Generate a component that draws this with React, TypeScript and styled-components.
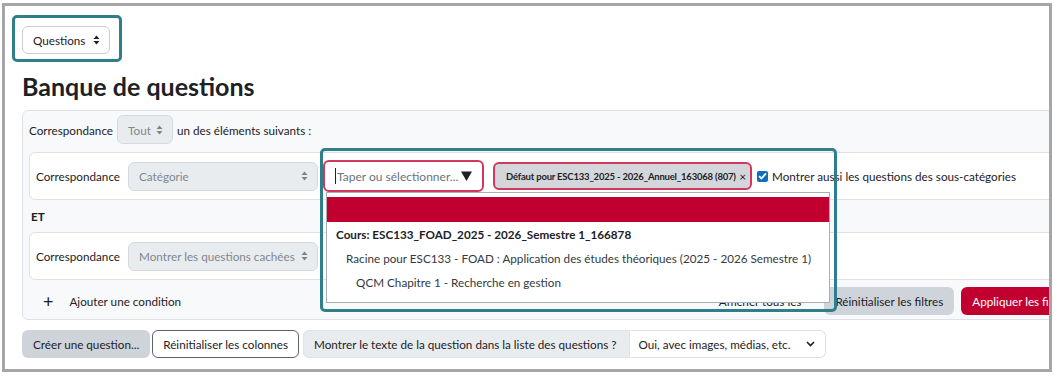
import React from 'react';
import styled, { createGlobalStyle } from 'styled-components';

const teal = '#2f7e8b';
const mark = '#d2385c';
const red = '#c1002f';
const ink = '#1d2125';

const GlobalStyle = createGlobalStyle`
  body {
    margin: 0;
    background: #fff;
    font-family: Lato, 'Noto Sans', sans-serif;
    font-size: 11.7px;
    color: ${ink};
  }
`;

const Frame = styled.div`
  position: relative;
  margin: 3px 0 0 2px;
  width: 1050px;
  height: 369px;
  box-sizing: border-box;
  border: 3px solid #a6a6a6;
  overflow: hidden;
`;

const Page = styled.div`
  width: 1110px;
  padding: 9px 0 0 17px;
`;

const Annotation = styled.div`
  display: inline-block;
  margin-left: -10px;
  padding: 8px 9px 5px 7px;
  border: 3px solid ${teal};
  border-radius: 5px;
`;

const Heading = styled.h2`
  margin: 10px 0 9px;
  font-size: 25px;
  line-height: 29px;
  font-weight: 700;
`;

const SelectBox = styled.div<{ $w: number; $h?: number; $disabled?: boolean }>`
  display: flex;
  align-items: center;
  justify-content: space-between;
  flex-shrink: 0;
  box-sizing: border-box;
  width: ${(p) => p.$w}px;
  height: ${(p) => p.$h ?? 29}px;
  padding: 0 9px 0 10px;
  border: 1px solid ${(p) => (p.$disabled ? '#d6dadf' : '#c9cdd2')};
  border-radius: 6px;
  background: ${(p) => (p.$disabled ? '#e9ecef' : '#fff')};
  color: ${(p) => (p.$disabled ? '#80878e' : ink)};
  white-space: nowrap;
  svg {
    flex-shrink: 0;
  }
`;

const UpDown = ({ color }: { color: string }) => (
  <svg width="7" height="10" viewBox="0 0 7 10">
    <path d="M3.5 0.5L6.5 4H0.5z M3.5 9.5L0.5 6h6z" fill={color} />
  </svg>
);

const Panel = styled.div`
  box-sizing: border-box;
  width: 1067px;
  padding: 4px 6px;
  border: 1px solid #dee2e6;
  border-radius: 6px;
  background: #f8f9fa;
`;

const Row = styled.div`
  display: flex;
  align-items: center;
  gap: 4px;
  white-space: nowrap;
`;

const Card = styled.div<{ $first?: boolean }>`
  display: flex;
  align-items: center;
  height: 48px;
  box-sizing: border-box;
  margin-top: ${(p) => (p.$first ? 8 : 0)}px;
  padding: 0 6px;
  border: 1px solid #dee2e6;
  border-radius: 6px;
  background: #fff;
  white-space: nowrap;
`;

const Label = styled.span`
  margin-right: 8px;
`;

const Joiner = styled.div`
  height: 32px;
  line-height: 32px;
  padding-left: 2px;
  font-weight: 700;
`;

const Picker = styled.div`
  position: relative;
  margin-left: 5px;
`;

const AutoInput = styled.div`
  display: flex;
  align-items: center;
  box-sizing: border-box;
  width: 161px;
  height: 32px;
  padding: 0 10px 0 10px;
  border: 2px solid ${mark};
  border-radius: 6px;
  background: #fff;
  color: #6a737b;
  font-size: 12px;
  svg {
    flex-shrink: 0;
  }
`;

const Caret = styled.span`
  width: 1px;
  height: 16px;
  margin-right: 1px;
  background: ${ink};
`;

const Grow = styled.span`
  flex: 1;
`;

const Dropdown = styled.ul`
  position: absolute;
  top: 100%;
  left: 3px;
  z-index: 10;
  box-sizing: border-box;
  width: 504px;
  height: 111px;
  margin: 0;
  padding: 4px 0 0;
  list-style: none;
  border: 1px solid #a9aeb3;
  background: #fff;
`;

const Option = styled.li<{ $level: number; $active?: boolean; $bold?: boolean }>`
  height: ${(p) => (p.$active ? 25 : 24)}px;
  line-height: 24px;
  padding-left: ${(p) => 9 + p.$level * 10}px;
  background: ${(p) => (p.$active ? red : 'transparent')};
  font-weight: ${(p) => (p.$bold ? 700 : 400)};
  color: ${(p) => (p.$bold ? ink : '#333a40')};
`;

const Highlight = styled.div`
  position: absolute;
  left: -3px;
  top: -12px;
  z-index: 11;
  width: 517px;
  height: 164px;
  box-sizing: border-box;
  border: 3px solid ${teal};
  border-radius: 5px;
  pointer-events: none;
`;

const Chip = styled.div`
  display: flex;
  align-items: center;
  box-sizing: border-box;
  width: 259px;
  height: 28px;
  margin-left: 9px;
  padding: 0 4px 0 11px;
  border: 2px solid ${mark};
  border-radius: 6px;
  background: #d3d7db;
  font-size: 9.5px;
  letter-spacing: -0.2px;
  font-weight: 700;
`;

const Close = styled.span`
  margin-left: auto;
  font-size: 12px;
  font-weight: 400;
`;

const Check = styled.span`
  display: inline-flex;
  align-items: center;
  justify-content: center;
  width: 11px;
  height: 11px;
  margin: 0 4px 0 5px;
  border-radius: 2px;
  background: #0f6cbf;
`;

const Footer = styled.div`
  display: flex;
  align-items: center;
  height: 28px;
  margin-top: 7px;
  white-space: nowrap;
`;

const AddCondition = styled.div`
  display: flex;
  align-items: center;
  padding-left: 14px;
  gap: 16px;
`;

const Plus = styled.span`
  font-size: 18px;
  line-height: 18px;
`;

const ShowAll = styled.span`
  margin-left: auto;
  margin-right: 23px;
`;

const Button = styled.button<{ $variant: 'primary' | 'secondary' | 'outline' }>`
  height: 28px;
  padding: 0 10px;
  border: 1px solid ${(p) => (p.$variant === 'outline' ? '#5b636a' : 'transparent')};
  border-radius: 6px;
  background: ${(p) => (p.$variant === 'primary' ? red : p.$variant === 'secondary' ? '#ced4da' : '#fff')};
  color: ${(p) => (p.$variant === 'primary' ? '#fff' : ink)};
  font-family: inherit;
  font-size: 11.7px;
  white-space: nowrap;
`;

const ApplyButton = styled(Button)`
  margin-left: 7px;
`;

const Toolbar = styled.div`
  display: flex;
  align-items: center;
  gap: 2px;
  margin-top: 10px;
`;

const Group = styled.div`
  display: flex;
  margin-left: 2px;
  height: 28px;
`;

const GroupLabel = styled.span`
  display: flex;
  align-items: center;
  padding: 0 12px 0 10px;
  border: 1px solid #dee2e6;
  border-radius: 6px 0 0 6px;
  background: #e9ecef;
  white-space: nowrap;
`;

const GroupSelect = styled.div`
  display: flex;
  align-items: center;
  gap: 16px;
  padding: 0 10px 0 9px;
  border: 1px solid #dee2e6;
  border-left: none;
  border-radius: 0 6px 6px 0;
  background: #fff;
  white-space: nowrap;
`;

const Dot = styled.span`
  position: absolute;
  right: -6px;
  bottom: 5px;
  width: 4px;
  height: 5px;
  background: #000;
`;

const Triangle = () => (
  <svg width="11" height="10" viewBox="0 0 11 10">
    <path d="M0 0.5h11L5.5 10z" fill={ink} />
  </svg>
);

const Chevron = () => (
  <svg width="9" height="6" viewBox="0 0 9 6">
    <path d="M1 1l3.5 3.5L8 1" stroke={ink} strokeWidth="1.6" fill="none" />
  </svg>
);

const CheckMark = () => (
  <svg width="9" height="8" viewBox="0 0 9 8">
    <path d="M1 4.2l2.4 2.3L8 1.3" stroke="#fff" strokeWidth="1.8" fill="none" />
  </svg>
);

const categories = [
  { text: '', level: 0, active: true },
  { text: 'Cours: ESC133_FOAD_2025 - 2026_Semestre 1_166878', level: 0, bold: true },
  { text: 'Racine pour ESC133 - FOAD : Application des études théoriques (2025 - 2026 Semestre 1)', level: 1 },
  { text: 'QCM Chapitre 1 - Recherche en gestion', level: 2 },
];

const App: React.FC = () => {
  return (
    <>
      <GlobalStyle />
      <Frame>
        <Page>
          <Annotation>
            <SelectBox $w={88} $h={28}>
              Questions <UpDown color={ink} />
            </SelectBox>
          </Annotation>
          <Heading>Banque de questions</Heading>
          <Panel>
            <Row>
              <span>Correspondance</span>
              <SelectBox $w={56} $disabled>
                Tout <UpDown color="#7c838a" />
              </SelectBox>
              <span>un des éléments suivants :</span>
            </Row>
            <Card $first>
              <Label>Correspondance</Label>
              <SelectBox $w={190} $disabled>
                Catégorie <UpDown color="#7c838a" />
              </SelectBox>
              <Picker>
                <AutoInput>
                  <Caret />
                  <Grow>Taper ou sélectionner...</Grow>
                  <Triangle />
                </AutoInput>
                <Dropdown>
                  {categories.map((c, i) => (
                    <Option key={i} $level={c.level} $active={c.active} $bold={c.bold}>
                      {c.text}
                    </Option>
                  ))}
                </Dropdown>
                <Highlight />
              </Picker>
              <Chip>
                Défaut pour ESC133_2025 - 2026_Annuel_163068 (807)
                <Close>×</Close>
              </Chip>
              <Check>
                <CheckMark />
              </Check>
              <span>Montrer aussi les questions des sous-catégories</span>
            </Card>
            <Joiner>ET</Joiner>
            <Card>
              <Label>Correspondance</Label>
              <SelectBox $w={190} $disabled>
                Montrer les questions cachées <UpDown color="#7c838a" />
              </SelectBox>
            </Card>
            <Footer>
              <AddCondition>
                <Plus>+</Plus>
                <span>Ajouter une condition</span>
              </AddCondition>
              <ShowAll>Afficher tous les</ShowAll>
              <Button $variant="secondary">Réinitialiser les filtres</Button>
              <ApplyButton $variant="primary">Appliquer les filtres</ApplyButton>
            </Footer>
          </Panel>
          <Toolbar>
            <Button $variant="secondary">Créer une question...</Button>
            <Button $variant="outline">Réinitialiser les colonnes</Button>
            <Group>
              <GroupLabel>Montrer le texte de la question dans la liste des questions ?</GroupLabel>
              <GroupSelect>
                Oui, avec images, médias, etc.
                <Chevron />
              </GroupSelect>
            </Group>
          </Toolbar>
        </Page>
        <Dot />
      </Frame>
    </>
  );
};

export default App;
